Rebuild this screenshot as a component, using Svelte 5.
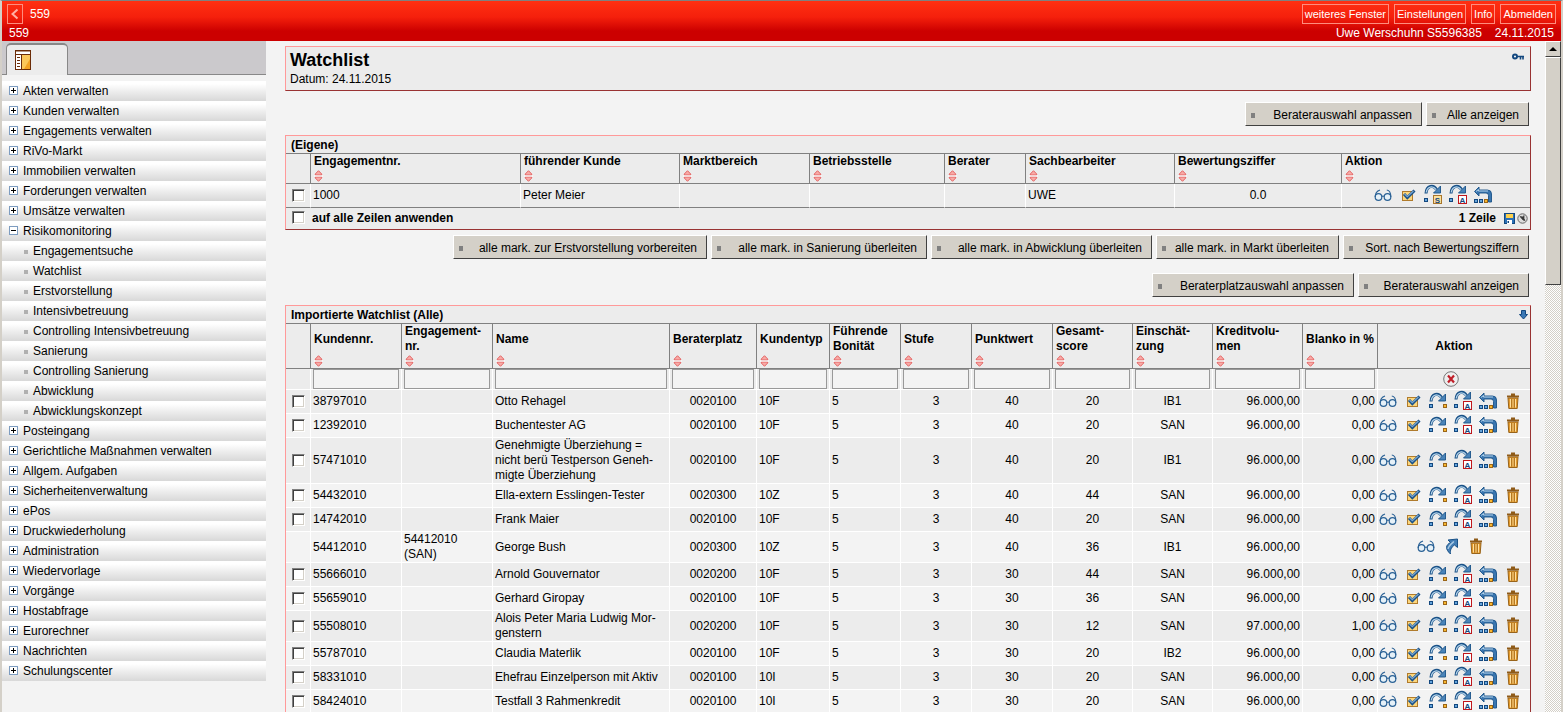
<script>
  const navigation = [
    { label: 'Akten verwalten' },
    { label: 'Kunden verwalten' },
    { label: 'Engagements verwalten' },
    { label: 'RiVo-Markt' },
    { label: 'Immobilien verwalten' },
    { label: 'Forderungen verwalten' },
    { label: 'Umsätze verwalten' },
    {
      label: 'Risikomonitoring',
      children: [
        'Engagementsuche',
        'Watchlist',
        'Erstvorstellung',
        'Intensivbetreuung',
        'Controlling Intensivbetreuung',
        'Sanierung',
        'Controlling Sanierung',
        'Abwicklung',
        'Abwicklungskonzept'
      ]
    },
    { label: 'Posteingang' },
    { label: 'Gerichtliche Maßnahmen verwalten' },
    { label: 'Allgem. Aufgaben' },
    { label: 'Sicherheitenverwaltung' },
    { label: 'ePos' },
    { label: 'Druckwiederholung' },
    { label: 'Administration' },
    { label: 'Wiedervorlage' },
    { label: 'Vorgänge' },
    { label: 'Hostabfrage' },
    { label: 'Eurorechner' },
    { label: 'Nachrichten' },
    { label: 'Schulungscenter' }
  ];

  // button bars, from top to bottom
  const topButtons = [
    { label: 'Beraterauswahl anpassen', width: 177 },
    { label: 'Alle anzeigen', width: 103 }
  ];
  const markButtons = [
    { label: 'alle mark. zur Erstvorstellung vorbereiten', width: 254 },
    { label: 'alle mark. in Sanierung überleiten', width: 216 },
    { label: 'alle mark. in Abwicklung überleiten', width: 221 },
    { label: 'alle mark. in Markt überleiten', width: 183 },
    { label: 'Sort. nach Bewertungsziffern', width: 186 }
  ];
  const listButtons = [
    { label: 'Beraterplatzauswahl anpassen', width: 202 },
    { label: 'Beraterauswahl anzeigen', width: 171 }
  ];

  const ownColumns = [
    { title: 'Engagementnr.', width: 210 },
    { title: 'führender Kunde' },
    { title: 'Marktbereich', width: 130 },
    { title: 'Betriebsstelle', width: 135 },
    { title: 'Berater', width: 81 },
    { title: 'Sachbearbeiter', width: 149 },
    { title: 'Bewertungsziffer', width: 167 },
    { title: 'Aktion', width: 188 }
  ];

  // key = field of a row, align = css class of the body cells
  const columns = [
    { key: 'kunde', title: ['Kundennr.'], width: 91 },
    { key: 'eng', title: ['Engagement-', 'nr.'], width: 91 },
    { key: 'name', title: ['Name'] },
    { key: 'platz', title: ['Beraterplatz'], width: 87, align: 'center' },
    { key: 'typ', title: ['Kundentyp'], width: 73 },
    { key: 'bon', title: ['Führende', 'Bonität'], width: 71 },
    { key: 'stufe', title: ['Stufe'], width: 71, align: 'center' },
    { key: 'punkte', title: ['Punktwert'], width: 81, align: 'center' },
    { key: 'score', title: ['Gesamt-', 'score'], width: 80, align: 'center' },
    { key: 'einsch', title: ['Einschät-', 'zung'], width: 80, align: 'center' },
    { key: 'volumen', title: ['Kreditvolu-', 'men'], width: 90, align: 'right' },
    { key: 'blanko', title: ['Blanko in %'], width: 75, align: 'right' }
  ];

  function row(kunde, name, platz, typ, punkte, score, einsch, volumen = '96.000,00', blanko = '0,00', eng = '') {
    return { kunde, name, platz, typ, bon: '5', stufe: '3', punkte, score, einsch, volumen, blanko, eng };
  }

  const rows = [
    row('38797010', 'Otto Rehagel', '0020100', '10F', '40', '20', 'IB1'),
    row('12392010', 'Buchentester AG', '0020100', '10F', '40', '20', 'SAN'),
    row('57471010', 'Genehmigte Überziehung =\nnicht berü Testperson Geneh-\nmigte Überziehung', '0020100', '10F', '40', '20', 'IB1'),
    row('54432010', 'Ella-extern Esslingen-Tester', '0020300', '10Z', '40', '44', 'SAN'),
    row('14742010', 'Frank Maier', '0020100', '10F', '40', '20', 'SAN'),
    row('54412010', 'George Bush', '0020300', '10Z', '40', '36', 'IB1', '96.000,00', '0,00', '54412010\n(SAN)'),
    row('55666010', 'Arnold Gouvernator', '0020200', '10F', '30', '44', 'SAN'),
    row('55659010', 'Gerhard Giropay', '0020100', '10F', '30', '36', 'SAN'),
    row('55508010', 'Alois Peter Maria Ludwig Mor-\ngenstern', '0020200', '10F', '30', '12', 'SAN', '97.000,00', '1,00'),
    row('55787010', 'Claudia Materlik', '0020100', '10F', '30', '20', 'IB2'),
    row('58331010', 'Ehefrau Einzelperson mit Aktiv', '0020100', '10I', '30', '20', 'SAN'),
    row('58424010', 'Testfall 3 Rahmenkredit', '0020100', '10I', '30', '20', 'SAN')
  ];

  const actionNames = {
    view: 'Ansehen',
    check: 'Erstvorstellung vorbereiten',
    move: 'Überleiten',
    moveS: 'In Sanierung überleiten',
    moveA: 'In Abwicklung überleiten',
    back: 'In Markt überleiten',
    up: 'Öffnen',
    trash: 'Löschen'
  };
  const rowActions = ['view', 'check', 'move', 'moveA', 'back', 'trash'];
  const openActions = ['view', 'up', 'trash'];
</script>

{#snippet sorter()}
  <button class="sorter" aria-label="Sortieren">
    <svg width="9" height="12" viewBox="0 0 9 12">
      <path d="M4.5 .7 7.700 4v1H1.300V4z" fill="#f8aaa6" stroke="#e46464" />
      <path d="M4.500 11.300 7.700 8V7H1.300v1z" fill="#f8aaa6" stroke="#e46464" />
      <path d="M0 6h9" stroke="#fff" />
    </svg>
  </button>
{/snippet}

{#snippet arc()}
  <path d="M3 10.500C3.500 2 10.500 1.500 13.500 6.500" fill="none" stroke="#1a5288" stroke-width="3" />
  <path d="M3.200 9.500C4.200 3 10 2.500 13 6.500" fill="none" stroke="#b4d3ea" stroke-width="1.300" />
  <path d="M17.500 3v7H10.500z" fill="#4a84b9" stroke="#1a5288" stroke-width=".9" />
{/snippet}

{#snippet icon(name)}
  <svg width="20" height="20" viewBox="0 1 20 20">
    {#if name === 'view'}
      <g fill="#e6f1f8" stroke="#2b6296" stroke-width="1.200">
        <circle cx="5.500" cy="12" r="3.300" />
        <circle cx="14.500" cy="12" r="3.300" />
        <path d="M2.200 12C2.200 8.500 4 6 7 5M17.800 12c0-3.500-.5-6.500-4-7M8.800 11.500q1.200-1 2.400 0" fill="none" />
      </g>
    {:else if name === 'check'}
      <rect x="4.500" y="6.500" width="10" height="9" fill="#fcd67c" stroke="#b07b2c" />
      <path d="M6 9 9.300 12.500 16.500 5.500" fill="none" stroke="#1a5288" stroke-width="3" />
      <path d="M6.500 9 9.300 11.700 15.500 6" fill="none" stroke="#7ba6cf" stroke-width="1.200" />
    {:else if name === 'move'}
      {@render arc()}
      <rect x="1.500" y="13.500" width="3" height="3" fill="#65a5dd" stroke="#13487f" />
      <rect x="15.500" y="13.500" width="3" height="3" fill="#f9b82f" stroke="#9a6518" />
    {:else if name === 'moveS' || name === 'moveA'}
      <g transform="translate(0 -2)">{@render arc()}</g>
      <rect x="1.500" y="13.500" width="3" height="3" fill="#65a5dd" stroke="#13487f" />
      {#if name === 'moveS'}
        <rect x="10.500" y="10.500" width="8" height="8" fill="#fce2a0" stroke="#a9752a" />
        <text x="14.500" y="17.500">S</text>
      {:else}
        <rect x="10.500" y="10.500" width="8" height="8" fill="#fff" stroke="#c0171c" />
        <text x="14.500" y="17.500">A</text>
      {/if}
    {:else if name === 'back'}
      <path d="M1.500 6.500 6 2v3h8.500q4 0 4 4v8H15.500V10.500q0-2.500-2.500-2.500H6v3z" fill="#3a76b0" stroke="#1a5288" stroke-width=".9" />
      <path d="M3 6.500 5.500 4.500V6H15" fill="none" stroke="#b4d3ea" />
      <g stroke="#13487f" fill="#65a5dd">
        <rect x="1.500" y="14.500" width="3" height="3" />
        <rect x="6.500" y="14.500" width="3" height="3" />
        <rect x="11.500" y="14.500" width="3" height="3" fill="#f9b82f" stroke="#9a6518" />
      </g>
    {:else if name === 'up'}
      <path d="M9.500 18C4 13 4.500 9 9.500 6.500L7 4l9.500-1v8.500L13.500 9C10 11.500 9 14 9.500 18z" fill="#447eb5" stroke="#1a5288" />
      <path d="M7 13C7.500 10 9.500 8.500 13 5.500" fill="none" stroke="#a9cae5" stroke-width="1.400" />
    {:else if name === 'trash'}
      <path d="M5 7h10l-.8 10.500H5.800z" fill="#e59b2c" stroke="#99641a" />
      <path d="M7.500 8v8.500M10 8v8.500M12.500 8v8.500" stroke="#ffe0a0" />
      <path d="M8.700 8v8.500M11.300 8v8.500" stroke="#9a651c" stroke-width=".8" />
      <path d="M4 5.500h12M8 3.500h4" stroke="#8f5b18" stroke-width="2" />
    {/if}
  </svg>
{/snippet}

{#snippet actions(names)}
  <div class="actions">
    {#each names as name}
      <button class="icon" aria-label={actionNames[name]}>{@render icon(name)}</button>
    {/each}
  </div>
{/snippet}

{#snippet buttonBar(buttons)}
  {#each buttons as b}
    <button style="width: {b.width}px">{b.label}</button>
  {/each}
{/snippet}

<div class="window">
  <header>
    <div class="bar">
      <button class="back" aria-label="Zurück">
        <svg width="14" height="18" viewBox="0 0 14 18">
          <path d="M9.500 4.500 4.500 9l5 4.500" fill="none" stroke="#ffb0a5" stroke-width="2" />
        </svg>
      </button>
      <span class="number">559</span>
      <nav>
        <a href="#fenster">weiteres Fenster</a>
        <a href="#einstellungen">Einstellungen</a>
        <a href="#info">Info</a>
        <a href="#abmelden">Abmelden</a>
      </nav>
    </div>
    <div class="status">
      <span class="client">559</span>
      <span>Uwe Werschuhn S5596385</span>
      <span>24.11.2015</span>
    </div>
  </header>

  <div class="frames">
    <aside>
      <div class="tabs">
        <button class="tab" aria-label="Navigation">
          <svg width="16" height="20" viewBox="0 0 16 20">
            <rect x=".5" y=".5" width="15" height="19" fill="#fff" stroke="#6b2c08" />
            <rect x="7" y="5" width="8" height="14" fill="#fbc75a" />
            <path d="M15 9v10H9z" fill="#f3a223" />
            <path d="M0 1h16M1 4.500h14M6.500 4v15" stroke="#6b2c08" />
            <path d="M2 7.500h3M2 10.500h3M2 13.500h3M2 16.500h3" stroke="#6b2c08" />
          </svg>
        </button>
      </div>
      <ul>
        {#each navigation as item}
          <li>
            <a href="#{item.label}">
              <svg width="9" height="9" viewBox="0 0 9 9">
                <rect x=".5" y=".5" width="8" height="8" fill="#fff" stroke="#7d9cc0" />
                <path d={item.children ? 'M2 4.5h5' : 'M2 4.5h5M4.500 2v5'} stroke="#000" />
              </svg>
              {item.label}
            </a>
            {#if item.children}
              <ul>
                {#each item.children as child}
                  <li><a class="sub" href="#{child}">{child}</a></li>
                {/each}
              </ul>
            {/if}
          </li>
        {/each}
      </ul>
    </aside>

    <main>
      <section class="box head">
        <div>
          <h1>Watchlist</h1>
          <p>Datum: 24.11.2015</p>
        </div>
        <svg width="12" height="8" viewBox="0 0 12 8">
          <circle cx="3" cy="3.500" r="2" fill="#fff" stroke="#13487f" stroke-width="2" />
          <path d="M5 3.500h7M8.500 4v2.500M11 4v2.500" stroke="#13487f" stroke-width="1.600" fill="none" />
        </svg>
      </section>

      <div class="buttons first">{@render buttonBar(topButtons)}</div>

      <section class="box">
        <h2>(Eigene)</h2>
        <table class="own">
          <colgroup>
            <col style="width: 25px" />
            {#each ownColumns as col}
              <col style={col.width ? `width: ${col.width}px` : ''} />
            {/each}
          </colgroup>
          <thead>
            <tr>
              <th></th>
              {#each ownColumns as col}
                <th>
                  <div class="title">{col.title}</div>
                  {@render sorter()}
                </th>
              {/each}
            </tr>
          </thead>
          <tbody>
            <tr>
              <td class="center"><input type="checkbox" aria-label="Zeile 1000 markieren" /></td>
              <td>1000</td>
              <td>Peter Meier</td>
              <td></td>
              <td></td>
              <td></td>
              <td>UWE</td>
              <td class="center">0.0</td>
              <td class="last">{@render actions(['view', 'check', 'moveS', 'moveA', 'back'])}</td>
            </tr>
          </tbody>
        </table>
        <div class="foot">
          <label><input type="checkbox" /> auf alle Zeilen anwenden</label>
          <span>1 Zeile</span>
          <svg width="11" height="11" viewBox="0 0 11 11">
            <rect x=".5" y=".5" width="10" height="10" fill="#2b70b8" stroke="#13487f" />
            <rect x="2" y="1" width="7" height="4" fill="#fcd04c" />
            <rect x="3" y="7" width="5" height="4" fill="#fff" />
            <rect x="3.500" y="8" width="1.500" height="2" fill="#13487f" />
          </svg>
          <svg width="11" height="11" viewBox="0 0 11 11">
            <circle cx="5.500" cy="5.500" r="4.700" fill="#ddd" stroke="#666" />
            <path d="M3 3.500 6 4l1-1.500v3l1 2-2-.5z" fill="#333" stroke="#444" stroke-width=".8" />
          </svg>
        </div>
      </section>

      <div class="buttons second">{@render buttonBar(markButtons)}</div>
      <div class="buttons third">{@render buttonBar(listButtons)}</div>

      <section class="box">
        <h2>
          Importierte Watchlist (Alle)
          <svg width="9" height="10" viewBox="0 0 9 10">
            <path d="M2.500.5h4v4h2L4.500 9 .5 4.500h2z" fill="#3a78b5" stroke="#13487f" />
          </svg>
        </h2>
        <table class="imported">
          <colgroup>
            <col style="width: 25px" />
            {#each columns as col}
              <col style={col.width ? `width: ${col.width}px` : ''} />
            {/each}
            <col style="width: 152px" />
          </colgroup>
          <thead>
            <tr>
              <th></th>
              {#each columns as col}
                <th>
                  <div class="title">
                    <span>{#each col.title as line, i}{#if i}<br />{/if}{line}{/each}</span>
                  </div>
                  {@render sorter()}
                </th>
              {/each}
              <th class="aktion">Aktion</th>
            </tr>
          </thead>
          <tbody>
            <tr class="filter">
              <td></td>
              {#each columns as col}
                <td><input type="text" aria-label="Filter {col.title.join('')}" /></td>
              {/each}
              <td class="last">
                <div class="actions">
                  <button class="icon" aria-label="Filter löschen">
                    <svg width="16" height="16" viewBox="0 0 16 16">
                      <circle cx="8" cy="8" r="7.300" fill="#eee" stroke="#777" />
                      <path d="M5 4.500 11 11.500M11 4.500 5 11.500" stroke="#c0202a" stroke-width="2.200" />
                    </svg>
                  </button>
                </div>
              </td>
            </tr>
            {#each rows as r}
              <tr>
                <td class="center">
                  {#if !r.eng}<input type="checkbox" aria-label="Zeile {r.kunde} markieren" />{/if}
                </td>
                {#each columns as col}
                  <td class={col.align}>{r[col.key]}</td>
                {/each}
                <td class="last">{@render actions(r.eng ? openActions : rowActions)}</td>
              </tr>
            {/each}
          </tbody>
        </table>
      </section>
    </main>

    <div class="scrollbar">
      <button aria-label="Nach oben">
        <svg width="8" height="4" viewBox="0 0 8 4"><path d="M0 4 4 0l4 4z" /></svg>
      </button>
      <div class="thumb"></div>
    </div>
  </div>
</div>

<style>
  :global(body) {
    margin: 0;
    overflow: hidden;
  }

  .window {
    height: 100vh;
    box-sizing: border-box;
    display: flex;
    flex-direction: column;
    border-top: 1px solid #808080;
    border-left: 2px solid #d4d0c8;
    border-right: 2px solid #d4d0c8;
    background: #f3f3f3;
    font: 12px/15px "Liberation Sans", Arial, sans-serif;
    color: #000;
  }

  a {
    color: inherit;
    text-decoration: none;
  }

  button {
    padding: 0;
    border: 0;
    background: none;
    font: inherit;
    color: inherit;
  }

  svg {
    display: block;
    flex: none;
    overflow: visible;
  }

  svg text {
    font: bold 8px "Liberation Sans", Arial, sans-serif;
    text-anchor: middle;
    fill: #13487f;
  }

  ul {
    list-style: none;
    margin: 0;
    padding: 0;
  }

  /* red title bar */
  header {
    flex: none;
    height: 40px;
    background: linear-gradient(#ff3012, #f5200c 40%, #cc0000 75%);
    color: #fff;
  }

  .bar {
    display: flex;
    align-items: center;
    padding: 3px 5px 0;
  }

  .back,
  header nav a {
    border: 1px solid #ff8d7e;
  }

  .number {
    margin-left: 7px;
  }

  header nav {
    display: flex;
    gap: 5px;
    margin-left: auto;
  }

  header nav a {
    padding: 2px;
    font-size: 11px;
    line-height: 14px;
  }

  .status {
    display: flex;
    gap: 13px;
    padding: 2px 7px 0;
  }

  .client {
    margin-right: auto;
  }

  .frames {
    flex: 1;
    min-height: 0;
    display: flex;
  }

  /* navigation */
  aside {
    flex: none;
    width: 264px;
    margin-right: 19px;
    overflow: hidden;
  }

  .tabs {
    height: 34px;
    padding: 2px 4px 0;
    margin-bottom: 6px;
    box-sizing: border-box;
    background: linear-gradient(#888, #888) bottom / 100% 1px no-repeat #cbc9cc;
    display: flex;
  }

  .tab {
    width: 62px;
    padding-left: 8px;
    border: 1px solid #888;
    border-width: 2px 1px 0 1px;
    border-radius: 5px 5px 0 0;
    background: #ececec;
  }

  aside li a {
    height: 20px;
    padding: 1px 0 0 7px;
    box-sizing: border-box;
    display: flex;
    align-items: center;
    gap: 5px;
    background: linear-gradient(#fff 15%, #ececec 55%, #d8d8d8);
  }

  aside li a svg {
    margin-bottom: 2px;
  }

  aside li a.sub {
    padding-left: 22px;
  }

  .sub::before {
    content: "";
    width: 4px;
    height: 4px;
    background: #b0b0b0;
  }

  main {
    flex: 1;
    min-width: 0;
    padding-top: 5px;
    overflow: hidden;
  }

  .box {
    border: 1px solid #ff9999;
    border-right-color: #993333;
    border-bottom-color: #993333;
    background: #ececec;
  }

  .head {
    display: flex;
    justify-content: space-between;
    padding: 3px 6px 1px 4px;
  }

  .head svg {
    margin-top: 3px;
  }

  h1 {
    margin: 0;
    font-size: 18px;
    line-height: 20px;
  }

  .head p {
    margin: 0;
    line-height: 19px;
  }

  h2 {
    display: flex;
    align-items: center;
    justify-content: space-between;
    height: 17px;
    margin: 0;
    padding: 1px 2px 0 5px;
    box-sizing: border-box;
    font-size: 12px;
  }

  .buttons {
    display: flex;
    justify-content: flex-end;
    gap: 4px;
    padding-right: 2px;
  }

  .buttons.first {
    margin: 11px 0 9px;
  }

  .buttons.second {
    margin: 5px 0 14px;
  }

  .buttons.third {
    margin-bottom: 8px;
  }

  .buttons button {
    display: flex;
    align-items: center;
    justify-content: space-between;
    height: 24px;
    padding: 2px 9px 0 5px;
    box-sizing: border-box;
    border: 1px solid #fff;
    border-right-color: #404040;
    border-bottom-color: #404040;
    background: #d4d0c8;
    white-space: nowrap;
  }

  .buttons button::before {
    content: "";
    width: 4px;
    height: 5px;
    background: #808080;
  }

  /* tables */
  table {
    width: 100%;
    table-layout: fixed;
    border-collapse: separate;
    border-spacing: 0;
    border-top: 1px solid #808080;
  }

  th,
  td {
    box-sizing: border-box;
    padding: 0 2px;
    text-align: left;
    border-right: 1px solid #fff;
  }

  th {
    height: 30px;
    padding: 0 0 0 3px;
    vertical-align: top;
    border-right-color: #808080;
    border-bottom: 1px solid #808080;
    white-space: nowrap;
  }

  th:first-child,
  td:first-child {
    padding: 0;
  }

  th:last-child,
  td:last-child {
    border-right: 0;
  }

  td {
    height: 24px;
    white-space: pre-line;
    border-bottom: 1px solid #fff;
  }

  .own td {
    border-bottom-color: #808080;
  }

  .imported tbody tr:nth-child(odd) {
    background: #f3f3f3;
  }

  .imported .filter:first-child {
    background: #ececec;
  }

  .imported .title {
    height: 30px;
    display: flex;
    align-items: center;
  }

  .imported th {
    height: 45px;
  }

  .imported .aktion {
    padding: 0;
    vertical-align: middle;
    text-align: center;
  }

  .sorter {
    display: block;
    padding-top: 1px;
  }

  .center {
    text-align: center;
  }

  .right {
    text-align: right;
  }

  td.last {
    padding: 0 7px 0 0;
  }

  .actions {
    display: flex;
    justify-content: center;
    gap: 5px;
  }

  .icon {
    display: flex;
    justify-content: center;
    width: 20px;
  }

  .filter td {
    height: 21px;
  }

  input {
    display: block;
    margin: 0;
    box-sizing: border-box;
  }

  input[type="text"] {
    width: 100%;
    height: 20px;
    border: 1px solid #999;
    background: #f3f3f3;
    font: inherit;
  }

  input[type="checkbox"] {
    appearance: none;
    width: 13px;
    height: 13px;
    margin: 0 auto;
    border: 1px solid #808080;
    border-right-color: #fff;
    border-bottom-color: #fff;
    background: #fff;
    box-shadow: inset 1px 1px #404040, inset -1px -1px #d4d0c8;
  }

  .foot {
    display: flex;
    align-items: center;
    gap: 2px;
    height: 21px;
    padding: 0 2px 0 6px;
    font-weight: bold;
  }

  .foot label {
    display: flex;
    gap: 7px;
    margin-right: auto;
  }

  .foot span {
    margin-right: 6px;
  }

  .scrollbar {
    flex: none;
    width: 16px;
    margin-left: 14px;
    display: flex;
    flex-direction: column;
    background: repeating-conic-gradient(#fff 0 25%, #d4d0c8 0 50%) 0 0 / 2px 2px;
  }

  .scrollbar button,
  .thumb {
    box-sizing: border-box;
    border: 1px solid #fff;
    border-right-color: #404040;
    border-bottom-color: #404040;
    background: #d4d0c8;
  }

  .scrollbar button {
    display: flex;
    align-items: center;
    justify-content: center;
    height: 16px;
  }

  .thumb {
    height: 34%;
  }
</style>
